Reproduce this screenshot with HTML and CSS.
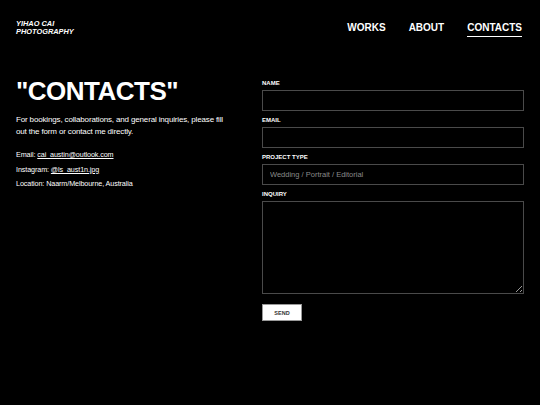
FILE: index.html
```html
<!DOCTYPE html>
<html lang="en">
<head>
<meta charset="utf-8">
<title>Yihao Cai Photography — Contacts</title>
<link rel="stylesheet" href="styles.css">
</head>
<body>
<header class="header">
  <a class="logo" href="#"><span class="logo-line">YIHAO CAI</span><span class="logo-line">PHOTOGRAPHY</span></a>
  <nav class="nav">
    <a href="#" class="nav-link">WORKS</a>
    <a href="#" class="nav-link">ABOUT</a>
    <a href="#" class="nav-link active">CONTACTS</a>
  </nav>
</header>
<main class="main">
  <section class="intro">
    <h1 class="title">"CONTACTS"</h1>
    <p class="lead">For bookings, collaborations, and general inquiries, please fill out the form or contact me directly.</p>
    <ul class="details">
      <li>Email: <a href="#">cai_austin@outlook.com</a></li>
      <li>Instagram: <a href="#">@ls_aust1n.jpg</a></li>
      <li>Location: Naarm/Melbourne, Australia</li>
    </ul>
  </section>
  <form class="form">
    <div class="field">
      <label class="label" for="name">NAME</label>
      <input class="input" id="name" type="text">
    </div>
    <div class="field">
      <label class="label" for="email">EMAIL</label>
      <input class="input" id="email" type="email">
    </div>
    <div class="field">
      <label class="label" for="type">PROJECT TYPE</label>
      <input class="input" id="type" type="text" placeholder="Wedding / Portrait / Editorial">
    </div>
    <div class="field">
      <label class="label" for="inquiry">INQUIRY</label>
      <textarea class="input textarea" id="inquiry"></textarea>
    </div>
    <button class="send" type="button">SEND</button>
  </form>
</main>
</body>
</html>
```
FILE: styles.css
```css
* { box-sizing: border-box; }
html, body { margin: 0; padding: 0; }
body {
  background: #000;
  color: #fff;
  font-family: "Liberation Sans", Arial, sans-serif;
  width: 540px;
  height: 405px;
  overflow: hidden;
}
a { color: #fff; }
.header {
  display: flex;
  justify-content: space-between;
  align-items: flex-start;
  padding: 19px 18px 0 16px;
}
.logo {
  display: flex;
  flex-direction: column;
  font-size: 7.4px;
  font-weight: 700;
  font-style: italic;
  text-decoration: none;
  padding-top: 1px;
}
.logo-line {
  display: block;
  line-height: 7.6px;
  height: 7.6px;
}
.nav {
  display: flex;
  gap: 23px;
  padding-top: 3px;
}
.nav-link {
  font-size: 10px;
  font-weight: 700;
  text-decoration: none;
  line-height: 12px;
  padding-bottom: 2px;
}
.nav-link.active { border-bottom: 1px solid #fff; }
.main {
  display: grid;
  grid-template-columns: 222px 262px;
  column-gap: 24px;
  padding: 0 16px;
  margin-top: 38px;
}
.title {
  margin: 0;
  font-size: 26px;
  line-height: 28px;
  font-weight: 700;
  letter-spacing: -0.5px;
  padding-top: 2px;
}
.lead {
  margin: 9px 0 0;
  max-width: 212px;
  font-size: 8px;
  line-height: 11.5px;
  letter-spacing: -0.15px;
}
.details {
  list-style: none;
  margin: 11px 0 0;
  padding: 0;
  font-size: 7.2px;
  line-height: 14.5px;
  letter-spacing: -0.1px;
}
.form {
  display: flex;
  flex-direction: column;
  gap: 5px;
  padding-top: 4px;
}
.field { display: flex; flex-direction: column; }
.label {
  font-size: 6px;
  line-height: 8px;
  font-weight: 700;
  margin-bottom: 3px;
}
.input {
  width: 262px;
  height: 21px;
  background: #000;
  border: 1px solid #4a4a4a;
  color: #fff;
  font-family: "Liberation Sans", Arial, sans-serif;
  font-size: 7.5px;
  padding: 0 7px;
  outline: none;
  border-radius: 0;
}
.input::placeholder { color: #8a8a8a; }
.textarea {
  height: 93px;
  resize: vertical;
  padding: 6px 7px;
}
.send {
  margin-top: 5px;
  width: 40px;
  height: 17px;
  background: #fff;
  color: #333;
  border: 1px solid #999;
  font-family: "Liberation Sans", Arial, sans-serif;
  font-size: 5.5px;
  font-weight: 700;
  padding: 0;
  border-radius: 0;
}
```
